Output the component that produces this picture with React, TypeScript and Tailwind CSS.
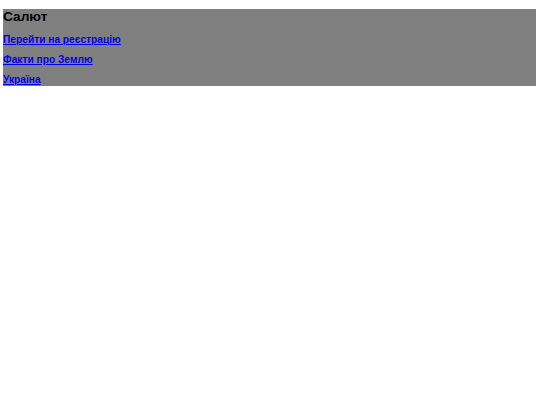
export default function App() {
  const links = ['Перейти на реєстрацію', 'Факти про Землю', 'Україна'];
  return (
    <div className="min-h-[405px] bg-white pt-[9px] pl-[3px]" style={{ fontFamily: '"Liberation Sans", Arial, sans-serif' }}>
      <div className="w-[533px] bg-[#808080]">
        <h1 className="text-[13.7px] leading-[16px] font-bold text-black">Салют</h1>
        <div className="flex flex-col pt-[1px]">
          {links.map((l) => (
            <a key={l} href="#" className="mt-[8px] block text-[10.2px] leading-[12px] font-bold text-[#0000ee] underline">
              {l}
            </a>
          ))}
        </div>
      </div>
    </div>
  );
}
